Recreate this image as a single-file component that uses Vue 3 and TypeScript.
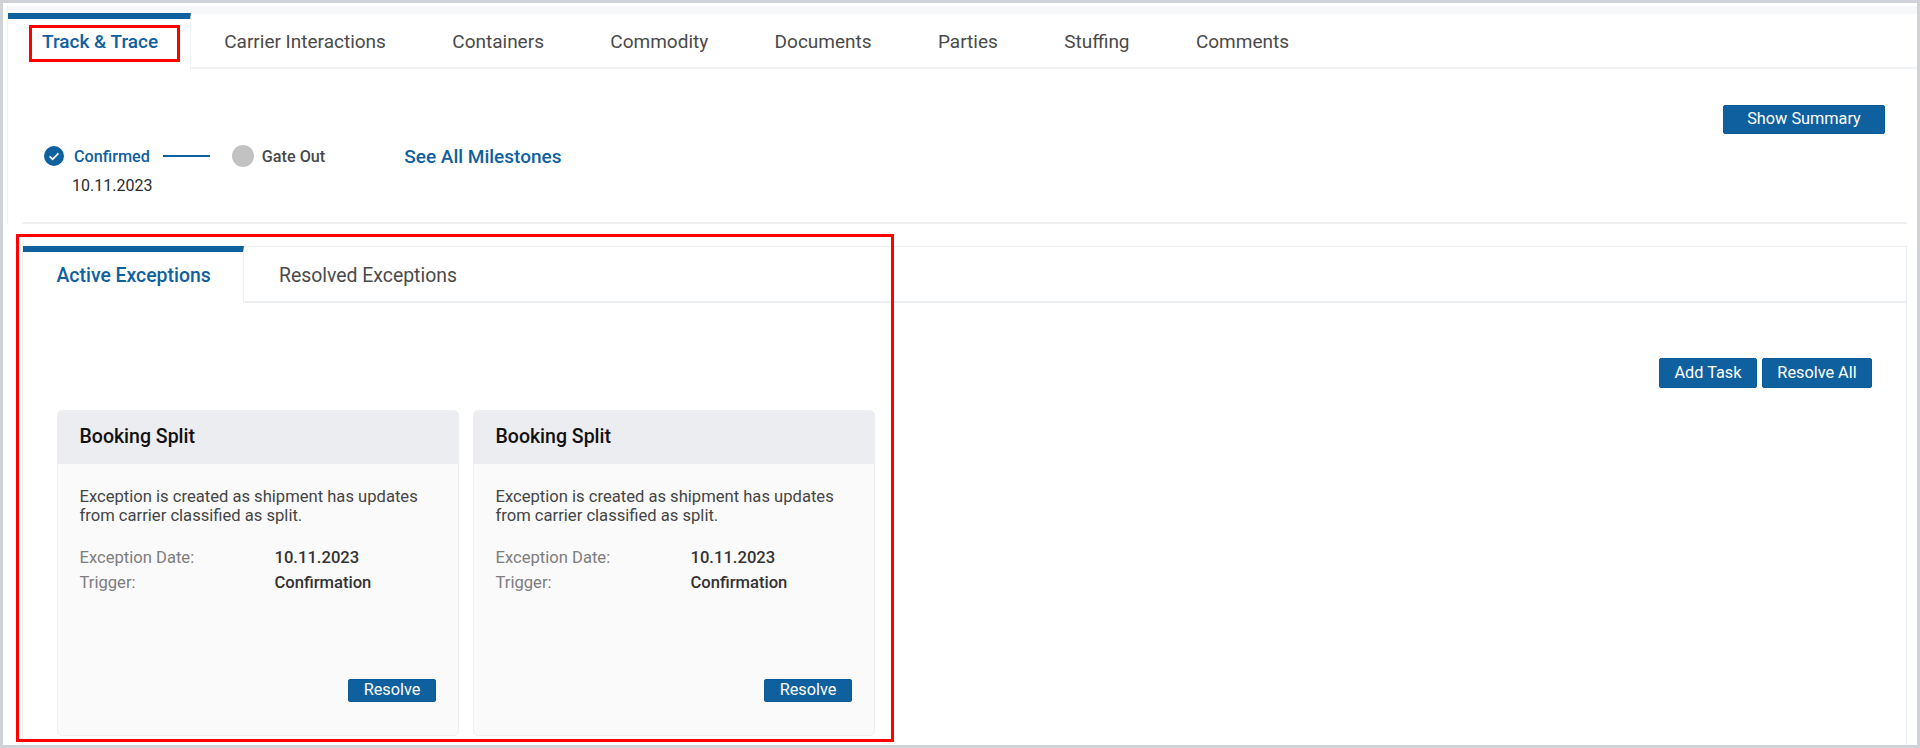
<script setup lang="ts">
interface ExceptionCard {
  title: string
  description: string
  date: string
  trigger: string
}

const mainTabs: string[] = [
  'Carrier Interactions',
  'Containers',
  'Commodity',
  'Documents',
  'Parties',
  'Stuffing',
  'Comments',
]

const cards: ExceptionCard[] = [1, 2].map(() => ({
  title: 'Booking Split',
  description: 'Exception is created as shipment has updates from carrier classified as split.',
  date: '10.11.2023',
  trigger: 'Confirmation',
}))
</script>

<template>
  <div class="page">
    <main class="sheet">
      <div class="top">
        <nav class="main-tabs">
          <div class="main-tab active">
            <span class="marked">Track &amp; Trace</span>
          </div>
          <div v-for="tab in mainTabs" :key="tab" class="main-tab">{{ tab }}</div>
        </nav>

        <section class="milestones">
          <div class="track">
            <div class="steps">
              <svg class="check" viewBox="0 0 20 20" aria-hidden="true">
                <circle cx="10" cy="10" r="10" fill="#0f609f" />
                <path d="M5.6 10.3l3 3 5.8-6" fill="none" stroke="#fff" stroke-width="1.7" />
              </svg>
              <span class="step-name done">Confirmed</span>
              <span class="connector"></span>
              <span class="pending"></span>
              <span class="step-name">Gate Out</span>
              <a class="see-all">See All Milestones</a>
            </div>
            <div class="step-date">10.11.2023</div>
          </div>
          <button class="btn summary">Show Summary</button>
        </section>
      </div>

      <section class="panel">
        <nav class="sub-tabs">
          <div class="sub-tab active">Active Exceptions</div>
          <div class="sub-tab">Resolved Exceptions</div>
        </nav>
        <div class="panel-body">
          <div class="toolbar">
            <button class="btn add">Add Task</button>
            <button class="btn resolve-all">Resolve All</button>
          </div>
          <div class="cards">
            <article v-for="(card, i) in cards" :key="i" class="card">
              <h3 class="card-head">{{ card.title }}</h3>
              <div class="card-body">
                <p class="desc">{{ card.description }}</p>
                <dl class="facts">
                  <dt>Exception Date:</dt>
                  <dd>{{ card.date }}</dd>
                  <dt>Trigger:</dt>
                  <dd>{{ card.trigger }}</dd>
                </dl>
                <button class="btn resolve">Resolve</button>
              </div>
            </article>
          </div>
        </div>
      </section>

      <div class="highlight"></div>
    </main>
  </div>
</template>

<style>
html,
body {
  margin: 0;
  background: #cfd3d8;
}
</style>

<style scoped>
.page {
  box-sizing: border-box;
  width: 1920px;
  height: 748px;
  padding: 3px;
  background: #cfd3d8;
  font-family: Roboto, "Liberation Sans", sans-serif;
  overflow: hidden;
}

.sheet {
  position: relative;
  height: 742px;
  background: #fff;
  overflow: hidden;
}

.top {
  margin: 3px 0 0 4px;
  border-left: 1px solid #eff1f3;
}

.main-tabs {
  display: flex;
  box-sizing: border-box;
  height: 63px;
  border-top: 8px solid #f5f7f9;
  border-bottom: 2px solid #f0f2f4;
}

.main-tab {
  display: flex;
  align-items: center;
  padding: 2px 33.2px 0;
  color: #4a4a4a;
  font-size: 19px;
  line-height: 24px;
  white-space: nowrap;
}

.main-tab.active {
  box-sizing: border-box;
  width: 183px;
  height: 57px;
  margin-top: -1px;
  padding: 0 0 3px 21px;
  border-top: 6px solid #0f609f;
  border-right: 1px solid #eff1f3;
  background: #fff;
  color: #0f609f;
  font-weight: 500;
}

.marked {
  padding: 2px 19px 5px 10px;
  border: 3px solid #f00;
}

.milestones {
  display: flex;
  justify-content: space-between;
  box-sizing: border-box;
  height: 155px;
  margin: 0 10px 0 14px;
  border-bottom: 2px solid #eef0f2;
}

.track {
  padding: 75px 0 0 22px;
}

.steps {
  display: flex;
  align-items: center;
  height: 24px;
}

.check {
  width: 20px;
  height: 20px;
}

.step-name {
  margin-left: 10px;
  color: #4a4a4a;
  font-size: 16.2px;
  font-weight: 500;
  white-space: nowrap;
}

.step-name.done {
  color: #0f609f;
}

.connector {
  width: 47px;
  height: 2px;
  margin-left: 13px;
  background: #0f609f;
}

.pending {
  width: 22px;
  height: 22px;
  margin-left: 22px;
  border-radius: 50%;
  background: #c2c2c2;
}

.pending + .step-name {
  margin-left: 8px;
}

.see-all {
  margin-left: 79px;
  color: #0f609f;
  font-size: 19px;
  font-weight: 500;
  white-space: nowrap;
}

.step-date {
  margin: 6px 0 0 28px;
  color: #2b2b2b;
  font-size: 16px;
  line-height: 24px;
}

.btn {
  box-sizing: border-box;
  height: 30px;
  padding: 0;
  border: 1px solid #0d5a96;
  border-radius: 2px;
  background: #0f609f;
  color: #fff;
  font-family: inherit;
  font-size: 16.3px;
  line-height: 1;
}

.summary {
  width: 162px;
  height: 29px;
  margin: 36px 22px 0 0;
}

.panel {
  box-sizing: border-box;
  height: 520px;
  margin: 22px 10px 0 19px;
  border: 1px solid #eceff2;
}

.sub-tabs {
  display: flex;
  box-sizing: border-box;
  height: 56px;
  border-bottom: 2px solid #eceff2;
}

.sub-tab {
  display: flex;
  align-items: center;
  padding: 2px 35px 0;
  color: #4a4a4a;
  font-size: 19.4px;
  white-space: nowrap;
}

.sub-tab.active {
  box-sizing: border-box;
  width: 221px;
  height: 57px;
  margin-top: -1px;
  padding: 0 0 4px 33.5px;
  border-top: 6px solid #0f609f;
  border-right: 1px solid #eceff2;
  background: #fff;
  color: #0f609f;
  font-weight: 500;
}

.panel-body {
  padding: 55px 34px 0;
}

.toolbar {
  display: flex;
  justify-content: flex-end;
  gap: 5px;
}

.add {
  width: 98px;
}

.resolve-all {
  width: 110px;
}

.cards {
  display: flex;
  gap: 14px;
  margin-top: 22px;
}

.card {
  display: flex;
  flex-direction: column;
  box-sizing: border-box;
  width: 402px;
  height: 326px;
  border: 1px solid #eeeff1;
  border-radius: 5px;
  background: #fafafa;
  overflow: hidden;
}

.card-head {
  height: 53px;
  margin: 0;
  padding: 0 21.5px;
  background: #ecedf0;
  color: #111;
  font-size: 19.5px;
  font-weight: 500;
  line-height: 52px;
}

.card-body {
  display: flex;
  flex-direction: column;
  flex: 1;
  padding: 23px 22px 33px 21.5px;
}

.desc {
  margin: 0;
  color: #444;
  font-size: 16.6px;
  line-height: 19px;
}

.facts {
  display: grid;
  grid-template-columns: 195px 1fr;
  grid-auto-rows: 24.5px;
  margin: 20px 0 0;
  font-size: 16.6px;
  line-height: 25px;
}

.facts dt {
  color: #7d7d7d;
}

.facts dd {
  margin: 0;
  color: #333;
  font-weight: 500;
}

.resolve {
  align-self: flex-end;
  width: 88px;
  height: 23px;
  margin-top: auto;
}

.highlight {
  position: absolute;
  left: 13px;
  top: 231px;
  width: 878px;
  height: 508px;
  box-sizing: border-box;
  border: 3px solid #f00;
  pointer-events: none;
}
</style>
